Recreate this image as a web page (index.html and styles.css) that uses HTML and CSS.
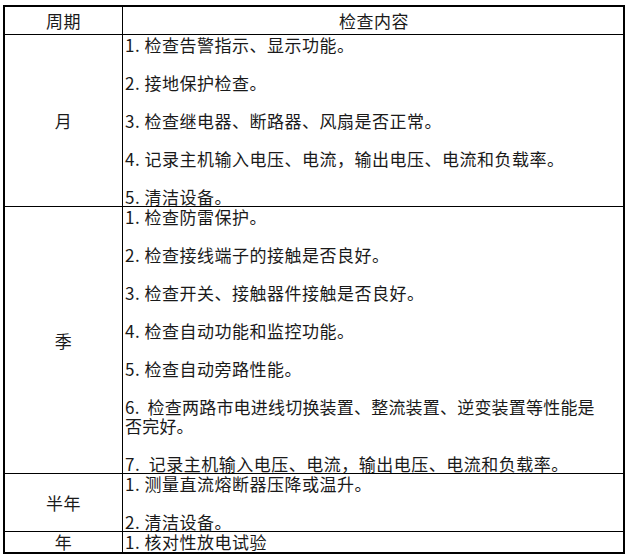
FILE: index.html
```html
<!DOCTYPE html>
<html lang="zh">
<head>
<meta charset="utf-8">
<link rel="stylesheet" href="styles.css">
</head>
<body>
<div class="sheet">
  <div class="cell period head">周期</div>
  <div class="cell items head center">检查内容</div>

  <div class="cell period">月</div>
  <div class="cell items">
    <p>1. 检查告警指示、显示功能。</p>
    <p>2. 接地保护检查。</p>
    <p>3. 检查继电器、断路器、风扇是否正常。</p>
    <p>4. 记录主机输入电压、电流，输出电压、电流和负载率。</p>
    <p>5. 清洁设备。</p>
  </div>

  <div class="cell period">季</div>
  <div class="cell items">
    <p>1. 检查防雷保护。</p>
    <p>2. 检查接线端子的接触是否良好。</p>
    <p>3. 检查开关、接触器件接触是否良好。</p>
    <p>4. 检查自动功能和监控功能。</p>
    <p>5. 检查自动旁路性能。</p>
    <p class="tight">6.&nbsp;&nbsp;检查两路市电进线切换装置、整流装置、逆变装置等性能是<br>否完好。</p>
    <p>7.&nbsp;&nbsp;记录主机输入电压、电流，输出电压、电流和负载率。</p>
  </div>

  <div class="cell period">半年</div>
  <div class="cell items">
    <p>1. 测量直流熔断器压降或温升。</p>
    <p>2. 清洁设备。</p>
  </div>

  <div class="cell period last">年</div>
  <div class="cell items last">
    <p>1. 核对性放电试验</p>
  </div>
</div>
</body>
</html>
```

FILE: styles.css
```css
html, body {
  margin: 0;
  padding: 0;
  background: #ffffff;
}

body {
  font-family: "Noto Sans CJK SC", "Noto Sans", sans-serif;
  font-size: 17px;
  color: #1a1a1a;
}

.sheet {
  box-sizing: border-box;
  width: 622px;
  margin: 5px 0 0 3px;
  border: 2px solid #000;
  display: grid;
  grid-template-columns: 118px 1fr;
}

.cell {
  box-sizing: border-box;
  border-bottom: 1px solid #000;
  line-height: 19px;
  letter-spacing: 0.5px;
  white-space: nowrap;
}

.cell.last {
  border-bottom: none;
  padding-bottom: 1px;
}

.period {
  border-right: 1px solid #000;
  display: flex;
  align-items: center;
  justify-content: center;
}

.head {
  height: 28px;
  display: flex;
  align-items: center;
}

.center {
  justify-content: center;
}

.items {
  padding-left: 2px;
}

.items p {
  margin: 0;
}

.items p + p {
  margin-top: 19px;
}

.items .tight {
  letter-spacing: 0.2px;
}
```
